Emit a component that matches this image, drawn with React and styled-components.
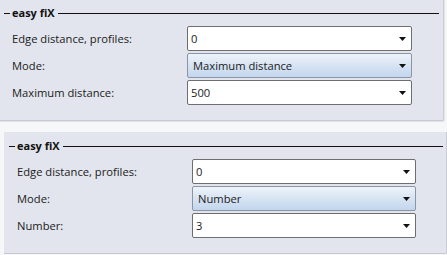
import React from 'react'
import styled, { createGlobalStyle } from 'styled-components'

const GlobalStyle = createGlobalStyle`
    body {
        margin: 0;
        background: #f6f7f9;
        font-family: "Open Sans", "Noto Sans", sans-serif;
        font-size: 11.2px;
        color: #1b1b1b;
        overflow: hidden;
    }
`

const grupos = [
    {
        offset: '-1px 3px 0 -1px',
        derecha: 31,
        filas: [
            { label: 'Edge distance, profiles:', valor: '0' },
            { label: 'Mode:', valor: 'Maximum distance', modo: true },
            { label: 'Maximum distance:', valor: '500' },
        ],
    },
    {
        offset: '11px 0 0 4px',
        derecha: 30,
        filas: [
            { label: 'Edge distance, profiles:', valor: '0' },
            { label: 'Mode:', valor: 'Number', modo: true },
            { label: 'Number:', valor: '3' },
        ],
    },
]

const Flecha = () => (
    <svg width="7" height="4" viewBox="0 0 7 4">
        <path d="M0 0 H7 L3.5 4 Z" fill="#111" />
    </svg>
)

const App = () => {
    return (
        <>
            <GlobalStyle />
            <Pagina>
                {grupos.map((g, i) => (
                    <Panel key={i} $offset={g.offset} $derecha={g.derecha}>
                        <Cabecera>
                            <Guion />
                            <Titulo>easy fiX</Titulo>
                            <Linea />
                        </Cabecera>
                        <Filas>
                            {g.filas.map(f => (
                                <Fila key={f.label}>
                                    <Etiqueta>{f.label}</Etiqueta>
                                    <Combo $modo={f.modo}>
                                        <Valor>{f.valor}</Valor>
                                        <Flecha />
                                    </Combo>
                                </Fila>
                            ))}
                        </Filas>
                    </Panel>
                ))}
            </Pagina>
        </>
    )
}

const Pagina = styled.div`
    display: flex;
    flex-direction: column;
`

const Panel = styled.section`
    margin: ${p => p.$offset};
    background: #e2e5ed;
    border-right: 1px solid #c9ccd4;
    border-bottom: 1px solid #c6c9d1;
    box-shadow: 1px 1px 1px rgba(0, 0, 0, 0.08);
    border-radius: 0 0 2px 0;
    padding: 8px ${p => p.$derecha}px 15px 13px;
`

const Cabecera = styled.div`
    display: flex;
    align-items: center;
    height: 12px;
    margin-left: -8px;
    margin-right: -27px;
`

const Guion = styled.span`
    width: 6px;
    height: 1px;
    background: #111;
    margin-right: 2px;
`

const Titulo = styled.span`
    font-weight: 700;
    font-size: 11px;
    color: #111;
    margin-right: 3px;
    line-height: 12px;
`

const Linea = styled.span`
    flex: 1;
    height: 1px;
    background: #111;
`

const Filas = styled.div`
    display: flex;
    flex-direction: column;
    gap: 2px;
    margin-top: 7px;
`

const Fila = styled.div`
    display: flex;
    align-items: center;
`

const Etiqueta = styled.label`
    width: 175px;
    flex-shrink: 0;
`

const Combo = styled.div`
    flex: 1;
    height: 25px;
    box-sizing: border-box;
    border: 1px solid ${p => (p.$modo ? '#8a96a6' : '#6e6e6e')};
    border-radius: 2px;
    background: ${p =>
        p.$modo
            ? 'linear-gradient(#eef3fa 0%, #d9e5f3 45%, #c3d6ee 100%)'
            : '#fff'};
    display: flex;
    align-items: center;
    padding: 0 5px 0 ${p => (p.$modo ? 5 : 3)}px;
    gap: 6px;
`

const Valor = styled.span`
    flex: 1;
    color: #1b1b1b;
`

export default App
